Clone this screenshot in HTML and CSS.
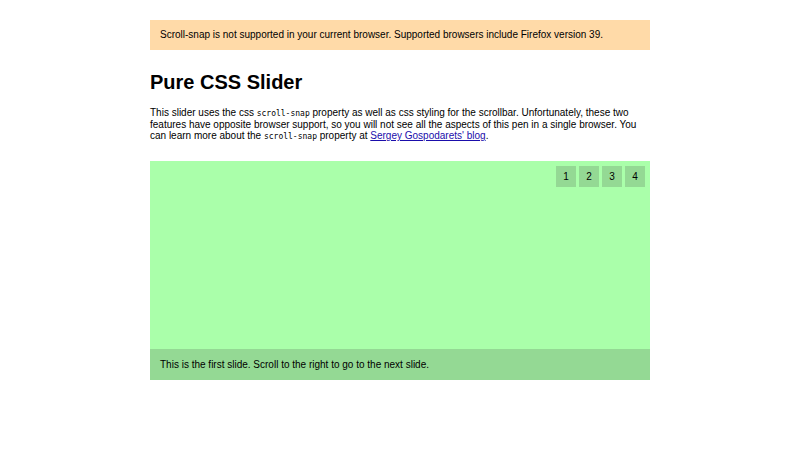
FILE: index.html
```html
<!DOCTYPE html>
<html lang="en">
<head>
    <meta charset="utf-8">
    <title>Pure CSS Slider</title>
    <link rel="stylesheet" href="styles.css">
</head>
<body>
    <div class="wrap">
        <div class="notice">Scroll-snap is not supported in your current browser. Supported browsers include Firefox version 39.</div>

        <h1>Pure CSS Slider</h1>
        <p class="intro">This slider uses the css <code>scroll-snap</code> property as well as css styling for the scrollbar. Unfortunately, these two features have opposite browser support, so you will not see all the aspects of this pen in a single browser. You can learn more about the <code>scroll-snap</code> property at <a href="#">Sergey Gospodarets' blog</a>.</p>

        <div class="slider">
            <div class="slider-nav">
                <a href="#slide-1">1</a>
                <a href="#slide-2">2</a>
                <a href="#slide-3">3</a>
                <a href="#slide-4">4</a>
            </div>
            <div class="slide-caption">This is the first slide. Scroll to the right to go to the next slide.</div>
        </div>
    </div>
</body>
</html>
```

FILE: styles.css
```css
html, body {
    margin: 0;
    padding: 0;
}
body {
    font-family: "Liberation Sans", Arial, sans-serif;
    font-size: 10px;
    color: #000;
    background: #fff;
}
.wrap {
    width: 500px;
    margin: 20px auto 0;
}
.notice {
    background: #ffdaa8;
    height: 30px;
    line-height: 30px;
    padding: 0 10px;
}
h1 {
    font-size: 20px;
    margin: 20px 0 0;
    line-height: 24px;
}
.intro {
    font-size: 10px;
    line-height: 11.5px;
    margin: 13px 0 19px;
}
.intro code {
    font-family: "DejaVu Sans Mono", monospace;
    font-size: 8px;
    line-height: 1;
}
.intro a {
    color: #1a0dab;
}
.slider {
    background: #aaffaa;
    height: 219px;
    display: flex;
    flex-direction: column;
    justify-content: space-between;
}
.slider-nav {
    display: flex;
    justify-content: flex-end;
    gap: 3px;
    padding: 5px 5px 0;
}
.slider-nav a {
    width: 20px;
    height: 21px;
    line-height: 21px;
    text-align: center;
    background: #94d994;
    color: #000;
    text-decoration: none;
}
.slide-caption {
    background: #94d994;
    height: 31px;
    line-height: 31px;
    padding: 0 10px;
}
```
